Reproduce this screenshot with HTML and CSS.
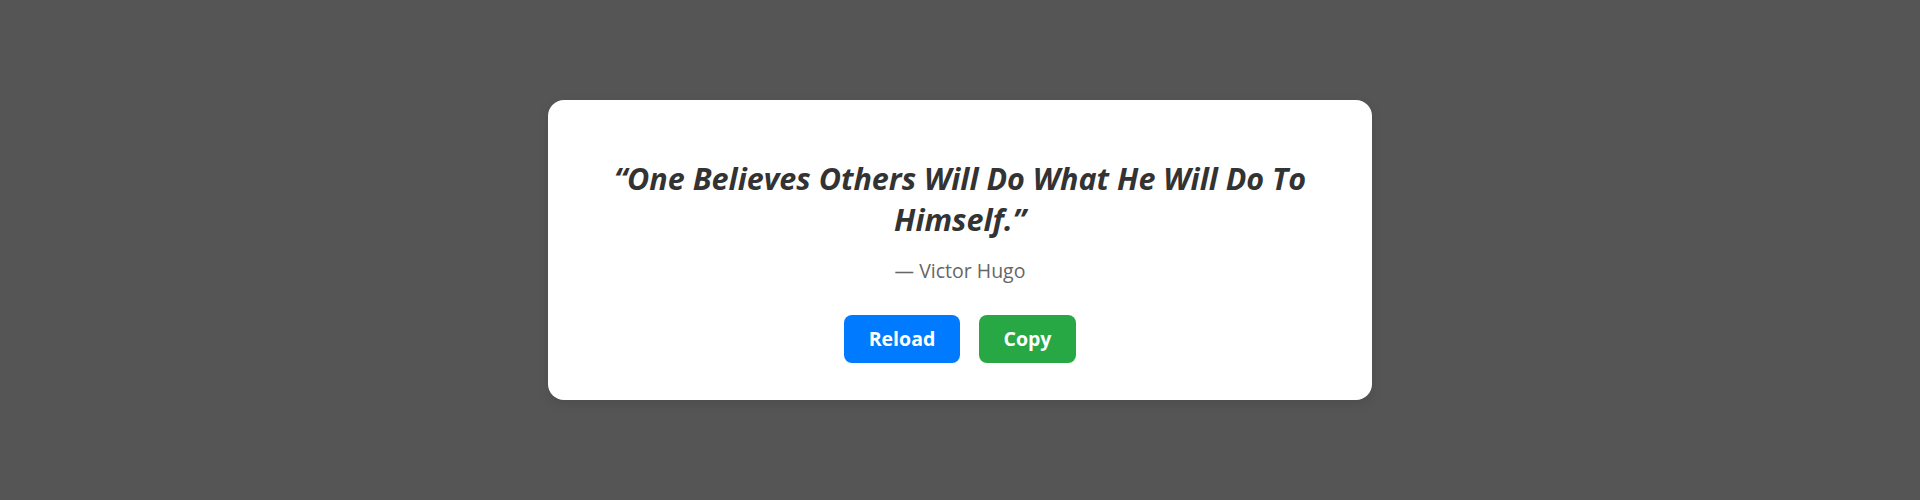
FILE: index.html
```html
<!DOCTYPE html>
<html lang="en">
<head>
<meta charset="utf-8">
<title>Quote</title>
<link rel="stylesheet" href="styles.css">
</head>
<body>
  <main class="stage">
    <section class="card">
      <p class="quote">“One Believes Others Will Do What He Will Do To Himself.”</p>
      <p class="author">— Victor Hugo</p>
      <div class="actions">
        <button class="btn btn-reload" type="button">Reload</button>
        <button class="btn btn-copy" type="button">Copy</button>
      </div>
    </section>
  </main>
</body>
</html>
```
FILE: styles.css
```css
html, body {
  margin: 0;
  padding: 0;
}
body {
  background: #555555;
  font-family: "Open Sans", "Noto Sans", sans-serif;
}
.stage {
  height: 500px;
  display: flex;
  align-items: center;
  justify-content: center;
}
.card {
  box-sizing: border-box;
  width: 824px;
  height: 300px;
  background: #ffffff;
  border-radius: 16px;
  box-shadow: 0 4px 12px rgba(0, 0, 0, 0.1);
  padding: 58px 40px 37px;
  display: flex;
  flex-direction: column;
  align-items: center;
  text-align: center;
}
.quote {
  margin: 0;
  font-size: 30.5px;
  line-height: 41.4px;
  font-weight: 700;
  font-style: italic;
  color: #333333;
}
.author {
  margin: 17px 0 0;
  font-size: 19.5px;
  line-height: 26px;
  color: #666666;
}
.actions {
  margin-top: 31px;
  display: flex;
  gap: 19px;
}
.btn {
  height: 48px;
  border: none;
  border-radius: 8px;
  padding: 0;
  font-family: inherit;
  font-size: 19.5px;
  font-weight: 700;
  color: #ffffff;
  cursor: pointer;
}
.btn-reload {
  background: #007bff;
  width: 116px;
}
.btn-copy {
  background: #28a745;
  width: 97px;
}
```
